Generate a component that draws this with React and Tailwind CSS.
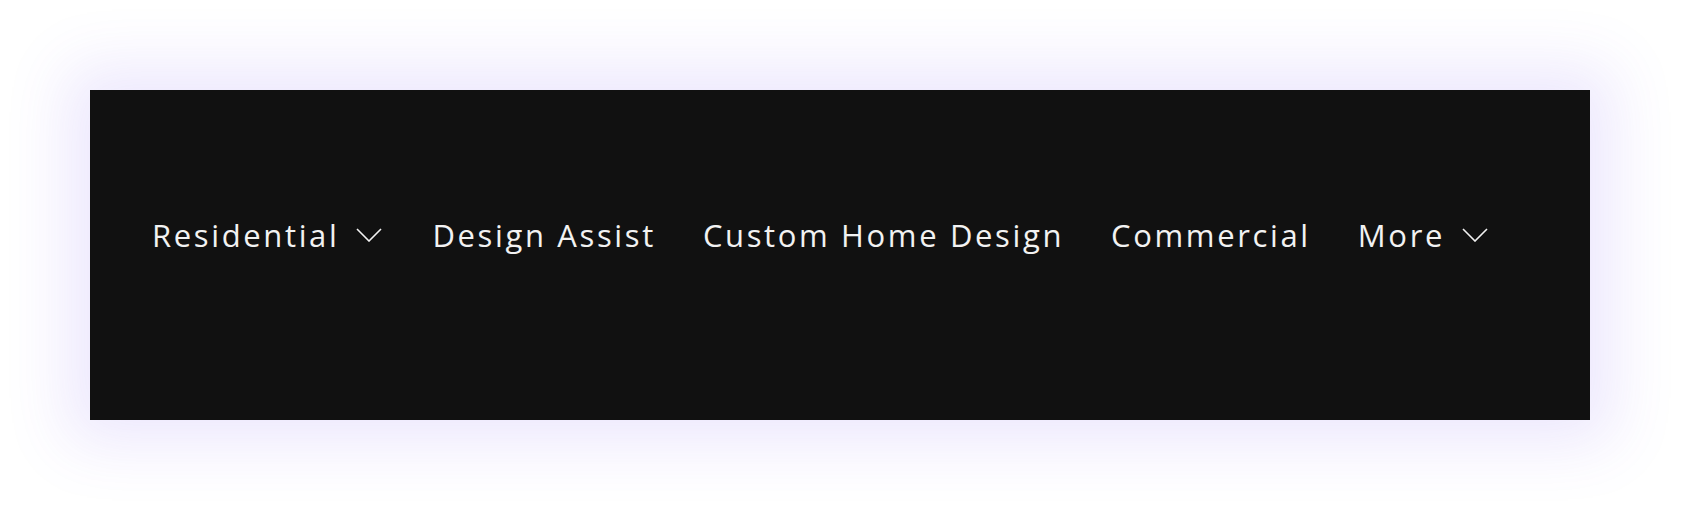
import React from 'react';

// Top navigation bar of a builder's site: five links, two with dropdown chevrons.
const links = [
  { label: 'Residential', menu: true },
  { label: 'Design Assist' },
  { label: 'Custom Home Design' },
  { label: 'Commercial' },
  { label: 'More', menu: true },
];

function Chevron() {
  return (
    <svg width="26" height="14" viewBox="0 0 26 14" fill="none" className="shrink-0 mr-[3px]">
      <path d="M1 1l12 12L25 1" stroke="#f2f2f2" strokeWidth="1.6" />
    </svg>
  );
}

export default function App() {
  return (
    <div className="w-[1700px] h-[530px] bg-white pt-[90px] pl-[90px]">
      <nav
        className="w-[1500px] h-[330px] bg-[#111111] shadow-[0_0_60px_22px_rgba(110,70,240,0.13)] pl-[62px] pt-[123px]"
        style={{ fontFamily: '"Open Sans", "DejaVu Sans", sans-serif' }}
      >
        <ul className="flex items-center gap-[47px] text-[31px] leading-[44px] text-[#f2f2f2] tracking-[0.085em]">
          {links.map((l) => (
            <li key={l.label} className="flex items-center gap-[17px]">
              <span>{l.label}</span>
              {l.menu && <Chevron />}
            </li>
          ))}
        </ul>
      </nav>
    </div>
  );
}
